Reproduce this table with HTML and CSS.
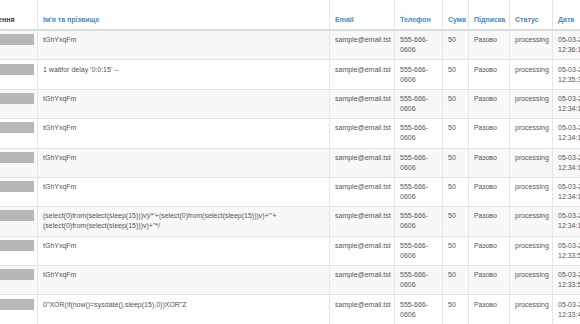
FILE: index.html
```html
<!DOCTYPE html>
<html lang="uk">
<head>
    <meta charset="UTF-8">
    <title>Замовлення</title>
    <link rel="stylesheet" href="styles.css">
</head>
<body>
    <table class="orders">
        <colgroup>
            <col class="c-id">
            <col class="c-name">
            <col class="c-email">
            <col class="c-phone">
            <col class="c-sum">
            <col class="c-sub">
            <col class="c-status">
            <col class="c-date">
        </colgroup>
        <thead>
            <tr>
                <th>Призначення</th>
                <th><a href="#">Ім'я та прізвище</a></th>
                <th><a href="#">Email</a></th>
                <th><a href="#">Телефон</a></th>
                <th><a href="#">Сума</a></th>
                <th><a href="#">Підписка</a></th>
                <th><a href="#">Статус</a></th>
                <th><a href="#">Дата</a></th>
            </tr>
        </thead>
        <tbody>
            <tr>
                <td><div class="redacted"></div></td>
                <td>tGhYxqFm</td>
                <td class="nw">sample@email.tst</td>
                <td>555-666-0606</td>
                <td class="nw">50</td>
                <td class="nw">Разово</td>
                <td class="nw">processing</td>
                <td>05-03-2018 12:36:18</td>
            </tr>
            <tr>
                <td><div class="redacted"></div></td>
                <td>1 waitfor delay '0:0:15' --</td>
                <td class="nw">sample@email.tst</td>
                <td>555-666-0606</td>
                <td class="nw">50</td>
                <td class="nw">Разово</td>
                <td class="nw">processing</td>
                <td>05-03-2018 12:35:32</td>
            </tr>
            <tr>
                <td><div class="redacted"></div></td>
                <td>tGhYxqFm</td>
                <td class="nw">sample@email.tst</td>
                <td>555-666-0606</td>
                <td class="nw">50</td>
                <td class="nw">Разово</td>
                <td class="nw">processing</td>
                <td>05-03-2018 12:34:19</td>
            </tr>
            <tr>
                <td><div class="redacted"></div></td>
                <td>tGhYxqFm</td>
                <td class="nw">sample@email.tst</td>
                <td>555-666-0606</td>
                <td class="nw">50</td>
                <td class="nw">Разово</td>
                <td class="nw">processing</td>
                <td>05-03-2018 12:34:17</td>
            </tr>
            <tr>
                <td><div class="redacted"></div></td>
                <td>tGhYxqFm</td>
                <td class="nw">sample@email.tst</td>
                <td>555-666-0606</td>
                <td class="nw">50</td>
                <td class="nw">Разово</td>
                <td class="nw">processing</td>
                <td>05-03-2018 12:34:15</td>
            </tr>
            <tr>
                <td><div class="redacted"></div></td>
                <td>tGhYxqFm</td>
                <td class="nw">sample@email.tst</td>
                <td>555-666-0606</td>
                <td class="nw">50</td>
                <td class="nw">Разово</td>
                <td class="nw">processing</td>
                <td>05-03-2018 12:34:13</td>
            </tr>
            <tr>
                <td><div class="redacted"></div></td>
                <td>(select(0)from(select(sleep(15)))v)/*'+(select(0)from(select(sleep(15)))v)+'"+(select(0)from(select(sleep(15)))v)+"*/</td>
                <td class="nw">sample@email.tst</td>
                <td>555-666-0606</td>
                <td class="nw">50</td>
                <td class="nw">Разово</td>
                <td class="nw">processing</td>
                <td>05-03-2018 12:34:11</td>
            </tr>
            <tr>
                <td><div class="redacted"></div></td>
                <td>tGhYxqFm</td>
                <td class="nw">sample@email.tst</td>
                <td>555-666-0606</td>
                <td class="nw">50</td>
                <td class="nw">Разово</td>
                <td class="nw">processing</td>
                <td>05-03-2018 12:33:58</td>
            </tr>
            <tr>
                <td><div class="redacted"></div></td>
                <td>tGhYxqFm</td>
                <td class="nw">sample@email.tst</td>
                <td>555-666-0606</td>
                <td class="nw">50</td>
                <td class="nw">Разово</td>
                <td class="nw">processing</td>
                <td>05-03-2018 12:33:52</td>
            </tr>
            <tr>
                <td><div class="redacted"></div></td>
                <td>0"XOR(if(now()=sysdate(),sleep(15),0))XOR"Z</td>
                <td class="nw">sample@email.tst</td>
                <td>555-666-0606</td>
                <td class="nw">50</td>
                <td class="nw">Разово</td>
                <td class="nw">processing</td>
                <td>05-03-2018 12:33:47</td>
            </tr>
        </tbody>
    </table>
</body>
</html>
```

FILE: styles.css
```css
body {
    margin: 0;
    background: #fff;
    font-family: 'Liberation Sans', Arial, sans-serif;
    font-size: 7px;
    line-height: 10px;
    color: #555;
    overflow: hidden;
}
.orders {
    border-collapse: collapse;
    table-layout: fixed;
    width: 704px;
    margin-left: -37px;
}
.c-id { width: 74px; }
.c-name { width: 292px; }
.c-email { width: 65px; }
.c-phone { width: 48px; }
.c-sum { width: 26px; }
.c-sub { width: 41px; }
.c-status { width: 43px; }
.c-date { width: 115px; }
.orders th,
.orders td {
    text-align: left;
    border-left: 1px solid #e6e6e6;
    border-right: 1px solid #e6e6e6;
    word-wrap: break-word;
}
.orders th {
    padding: 15px 3px 4px 5px;
    vertical-align: bottom;
    font-weight: bold;
    color: #333;
    white-space: nowrap;
    border-bottom: 2px solid #dcdcdc;
}
.orders th a {
    color: #428bca;
    text-decoration: none;
}
.orders td {
    padding: 4.2px 3px 4.2px 5px;
    vertical-align: top;
    border-top: 1px solid #e2e2e2;
}
.orders td.nw {
    white-space: nowrap;
}
.orders td:last-child {
    padding-right: 64px;
}
.orders tbody tr:nth-child(odd) {
    background: #f8f8f8;
}
.redacted {
    height: 11px;
    margin-top: -1px;
    background: #b7b7b7;
}
```
